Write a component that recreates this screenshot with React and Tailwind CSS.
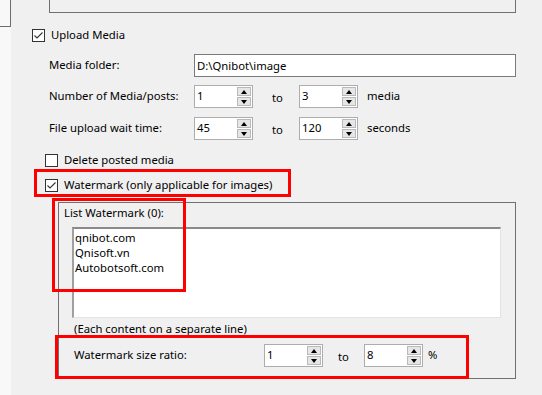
import React from "react";

const FONT = { fontFamily: '"Noto Sans", "Open Sans", sans-serif' };

function Check({ checked }) {
  return (
    <div className="w-[13px] h-[13px] border border-[#333333] bg-white flex items-center justify-center shrink-0">
      {checked && (
        <svg width="11" height="11" viewBox="0 0 11 11">
          <path d="M1.5 5.5 L4 8 L9.5 2.5" fill="none" stroke="#333333" strokeWidth="1.1" />
        </svg>
      )}
    </div>
  );
}

function Spin({ value }) {
  return (
    <div className="w-[59px] h-[23px] border border-[#adadad] bg-white flex shrink-0">
      <div className="flex-1 pl-[2px] pt-[1px] leading-[17px]">{value}</div>
      <div className="w-[14px] mr-[1px] my-[1px] flex flex-col gap-[1px]">
        <div className="flex-1 bg-[#e6e6e6] border border-[#b9b9b9] flex items-center justify-center">
          <div className="w-0 h-0 border-l-[3px] border-r-[3px] border-b-[4px] border-l-transparent border-r-transparent border-b-black" />
        </div>
        <div className="flex-1 bg-[#e6e6e6] border border-[#b9b9b9] flex items-center justify-center">
          <div className="w-0 h-0 border-l-[3px] border-r-[3px] border-t-[4px] border-l-transparent border-r-transparent border-t-black" />
        </div>
      </div>
    </div>
  );
}

export default function App() {
  return (
    <div className="w-[542px] h-[395px] flex overflow-hidden text-[11.3px] text-black" style={FONT}>
      <div className="w-[11px] bg-[#f8f8f8] shrink-0">
        <div className="h-[27px] border-r border-b border-[#6d6d6d]" />
      </div>
      <div className="relative flex-1 bg-[#f0f0f0] flex flex-col">
        <div className="ml-[38px] w-[467px] h-[13px] border-l border-r border-b border-[#707070]" />

        <div className="mt-[15px] h-[14px] ml-[21px] flex items-center">
          <Check checked />
          <span className="ml-[6px]">Upload Media</span>
        </div>

        <div className="mt-[12px] h-[23px] ml-[38px] flex items-center">
          <span className="w-[145px]">Media folder:</span>
          <div className="w-[322px] h-[23px] border border-[#7a7a7a] bg-white pl-[2px] leading-[21px]">D:\Qnibot\image</div>
        </div>

        <div className="mt-[8px] h-[23px] ml-[38px] flex items-center">
          <span className="w-[145px]">Number of Media/posts:</span>
          <Spin value="1" />
          <span className="ml-[19px] w-[27px] pt-[3px]">to</span>
          <Spin value="3" />
          <span className="ml-[9px]">media</span>
        </div>

        <div className="mt-[9px] h-[23px] ml-[38px] flex items-center">
          <span className="w-[145px]">File upload wait time:</span>
          <Spin value="45" />
          <span className="ml-[19px] w-[27px] pt-[3px]">to</span>
          <Spin value="120" />
          <span className="ml-[9px]">seconds</span>
        </div>

        <div className="mt-[14px] h-[13px] ml-[34px] flex items-center">
          <Check />
          <span className="ml-[6px]">Delete posted media</span>
        </div>

        <div className="mt-[12px] h-[13px] ml-[34px] flex items-center">
          <Check checked />
          <span className="ml-[6px]">Watermark (only applicable for images)</span>
        </div>

        <div className="mt-[10px] ml-[47px] w-[458px] h-[177px] border border-[#707070] flex flex-col">
          <div className="mt-[2px] h-[16px] pl-[5px] leading-[16px]">List Watermark (0):</div>
          <div className="mt-[6px] ml-[13px] w-[429px] h-[91px] border-t-2 border-l-2 border-r border-b border-t-[#8a8a8a] border-l-[#a0a0a0] border-r-[#e3e3e3] border-b-[#e3e3e3] bg-white pl-[1px] pt-[1px] leading-[15px]">
            <div>qnibot.com</div>
            <div>Qnisoft.vn</div>
            <div>Autobotsoft.com</div>
          </div>
          <div className="mt-[3px] ml-[15px] h-[16px] leading-[16px]">(Each content on a separate line)</div>
          <div className="mt-[7px] ml-[15px] h-[23px] flex items-center">
            <span className="w-[190px]">Watermark size ratio:</span>
            <Spin value="1" />
            <span className="ml-[15px] w-[26px] pt-[3px]">to</span>
            <Spin value="8" />
            <span className="ml-[5px]">%</span>
          </div>
        </div>

        <div className="absolute left-[23px] top-[169px] w-[257px] h-[28px] border-[3px] border-[#ff0000]" />
        <div className="absolute left-[41px] top-[198px] w-[134px] h-[94px] border-[3px] border-[#ff0000]" />
        <div className="absolute left-[44px] top-[335px] w-[414px] h-[44px] border-[3px] border-[#ff0000]" />
      </div>
    </div>
  );
}
